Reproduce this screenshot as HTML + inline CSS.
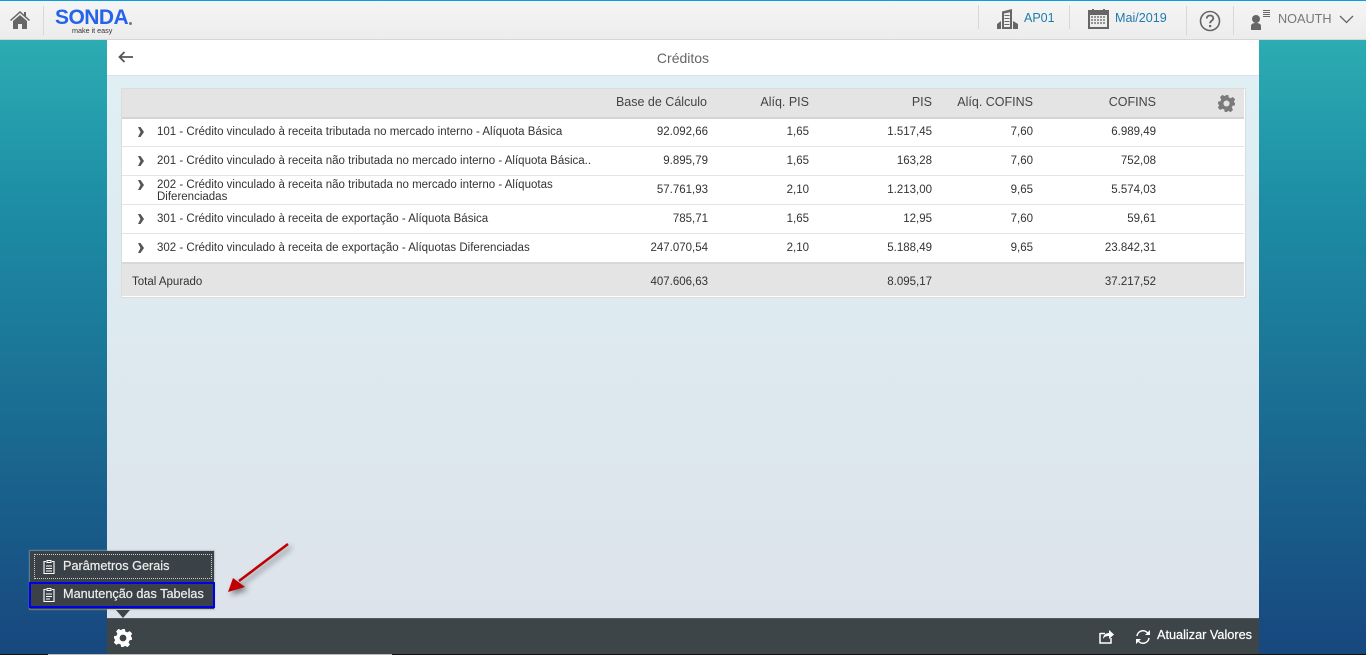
<!DOCTYPE html>
<html lang="pt"><head><meta charset="utf-8"><title>Créditos</title>
<style>
html,body{margin:0;padding:0;width:1366px;height:655px;overflow:hidden;font-family:"Liberation Sans",sans-serif;color:#333}
body{position:relative;background:linear-gradient(180deg,#2cacb3 40px,#1d8ea5 200px,#17477e 655px)}
div,span,svg{position:absolute;white-space:nowrap}
.t{font-size:11.5px;line-height:12px;color:#333}
.r{text-align:right;width:120px}
.h{font-size:12.5px;line-height:14px;color:#444;text-align:right;width:120px;top:95px}
.line{left:122px;width:1122px;height:1px;background:#e4e4e4}
.sep{width:1px;background:#d8d8d8}
.chev{left:137px;width:8px;height:10px}
</style></head><body>
<div style="left:0;top:0;width:1366px;height:40px;background:linear-gradient(#f5f5f5,#ececec);box-sizing:border-box"></div>
<div style="left:0;top:0;width:1366px;height:1px;background:#0a9fe0"></div>
<div style="left:0;top:39px;width:1366px;height:1px;background:#d6d6d6"></div>

<svg style="left:10px;top:10px" width="20" height="20" viewBox="0 0 20 20"><path d="M0 10L10 1l4 3.600V2h2v4.400L20 10l-1 1-9-8-9 8z" fill="#666"/><path d="M3 11l7-6 7 6v8h-5v-5H8v5H3z" fill="#666"/></svg>
<div class="sep" style="left:43px;top:6px;height:29px"></div>
<div style="left:55px;top:6px;font-size:21px;line-height:23px;font-weight:bold;color:#2563eb;letter-spacing:-.55px">SONDA</div>
<div style="left:129px;top:22px;width:3px;height:3px;border-radius:2px;background:#777"></div>
<div style="left:72px;top:27px;font-size:7.200px;line-height:8px;color:#333">make it easy</div>

<div class="sep" style="left:978px;top:5px;height:24px"></div>
<svg style="left:997px;top:9px" width="21" height="20" viewBox="0 0 21 20"><path d="M5 2.500L15 0v20H5z" fill="#666"/><path d="M7 4.500l6-1.300V18H7z" fill="#eee"/><path d="M7.500 6.500h5M7.500 9.500h5M7.500 12.500h5M7.500 15.500h5" stroke="#666" stroke-width="1"/><path d="M0 20v-5l4-3v8zM16 12l5 3v5h-5z" fill="#666"/><path d="M6 20v-2h8v2z" fill="#666"/></svg>
<div style="left:1024px;top:11px;font-size:12.500px;line-height:14px;color:#1f7bab">AP01</div>
<div class="sep" style="left:1069px;top:5px;height:24px"></div>
<svg style="left:1088px;top:9px" width="21" height="20" viewBox="0 0 21 20"><rect x="0" y="1" width="21" height="19" fill="#666"/><rect x="2" y="6" width="17" height="12" fill="#eee"/><path d="M3 8h15M3 11h15M3 14h15" stroke="#777" stroke-width="1.500" stroke-dasharray="2 1"/><path d="M5 0v3M16 0v3" stroke="#666" stroke-width="2"/></svg>
<div style="left:1115px;top:11px;font-size:12.600px;line-height:14px;color:#1f7bab">Mai/2019</div>
<div class="sep" style="left:1186px;top:6px;height:29px"></div>
<svg style="left:1199px;top:10px" width="22" height="22" viewBox="0 0 22 22"><circle cx="11" cy="11" r="9.500" fill="none" stroke="#666" stroke-width="1.600"/><path d="M7.800 8.500c0-2 1.500-3 3.300-3s3.200 1 3.200 2.800c0 2.500-3.200 2.300-3.200 5" fill="none" stroke="#666" stroke-width="1.800"/><rect x="10" y="15" width="2.200" height="2.200" fill="#666"/></svg>
<div class="sep" style="left:1233px;top:6px;height:29px"></div>
<svg style="left:1250px;top:10px" width="22" height="20" viewBox="0 0 22 20"><circle cx="6" cy="9" r="4" fill="#666"/><path d="M1 20v-4c0-2 2-3 5-3s5 1 5 3v4z" fill="#666"/><path d="M13 .5h7M13 2.500h7M13 4.500h7M13 6.500h7" stroke="#666" stroke-width="1"/></svg>
<div style="left:1278px;top:12px;font-size:12.700px;line-height:14px;color:#777">NOAUTH</div>
<svg style="left:1339px;top:15px" width="15" height="9" viewBox="0 0 15 9"><path d="M1 1l6.500 6.500L14 1" fill="none" stroke="#666" stroke-width="1.300"/></svg>

<div style="left:107px;top:40px;width:1152px;height:578px;background:linear-gradient(#dff0f4,#dde9ef 55%,#dde3eb)"></div>
<div style="left:107px;top:40px;width:1152px;height:35px;background:#fff;border-bottom:1px solid #d5e4e8"></div>
<svg style="left:118px;top:51px" width="15" height="12" viewBox="0 0 15 12"><path d="M6.500 1L1.500 6l5 5M2 6h13" fill="none" stroke="#555" stroke-width="1.800"/></svg>
<div style="left:107px;top:50px;width:1152px;text-align:center;font-size:14px;line-height:16px;color:#666">Créditos</div>

<div style="left:121px;top:88px;width:1123px;height:208px;background:#fff;border:1px solid #dcdcdc"></div>
<div style="left:122px;top:89px;width:1122px;height:30px;background:#e4e4e4;border-bottom:2px solid #d4d4d4;box-sizing:border-box"></div>
<div class="h" style="left:587px">Base de Cálculo</div>
<div class="h" style="left:689px">Alíq. PIS</div>
<div class="h" style="left:812px">PIS</div>
<div class="h" style="left:913px">Alíq. COFINS</div>
<div class="h" style="left:1036px">COFINS</div>
<svg style="left:1218px;top:95px" width="17" height="17" viewBox="-10 -10 20 20"><path d="M-2-10h4l.6 2.800 2.300 1 2.500-1.500 2.800 2.800-1.500 2.500 1 2.300L10-2v4l-2.800.6-1 2.300 1.500 2.500-2.800 2.800-2.500-1.500-2.300 1L2 10h-4l-.6-2.800-2.300-1-2.500 1.500-2.800-2.800 1.500-2.500-1-2.300L-10 2v-4l2.800-.6 1-2.300-1.500-2.500 2.800-2.800 2.500 1.500 2.300-1z" fill="#7b7b7b"/><circle r="3.600" fill="#e4e4e4"/></svg>

<div class="line" style="top:146px"></div><div class="line" style="top:175px"></div><div class="line" style="top:204px"></div><div class="line" style="top:233px"></div>
<div style="left:122px;top:262px;width:1122px;height:34px;background:#e4e4e4;border-top:2px solid #d8d8d8;box-sizing:border-box"></div>

<svg class="chev" style="top:127px" viewBox="0 0 8 10"><path d="M1 0h2.500L7 5 3.500 10H1l2.500-5z" fill="#555"/></svg>
<svg class="chev" style="top:156px" viewBox="0 0 8 10"><path d="M1 0h2.500L7 5 3.500 10H1l2.500-5z" fill="#555"/></svg>
<svg class="chev" style="top:180px" viewBox="0 0 8 10"><path d="M1 0h2.500L7 5 3.500 10H1l2.500-5z" fill="#555"/></svg>
<svg class="chev" style="top:214px" viewBox="0 0 8 10"><path d="M1 0h2.500L7 5 3.500 10H1l2.500-5z" fill="#555"/></svg>
<svg class="chev" style="top:243px" viewBox="0 0 8 10"><path d="M1 0h2.500L7 5 3.500 10H1l2.500-5z" fill="#555"/></svg>

<div class="t" style="left:157px;top:126px">101 - Crédito vinculado à receita tributada no mercado interno - Alíquota Básica</div>
<div class="t" style="left:157px;top:155px">201 - Crédito vinculado à receita não tributada no mercado interno - Alíquota Básica..</div>
<div class="t" style="left:157px;top:179px">202 - Crédito vinculado à receita não tributada no mercado interno - Alíquotas</div>
<div class="t" style="left:157px;top:191px">Diferenciadas</div>
<div class="t" style="left:157px;top:213px">301 - Crédito vinculado à receita de exportação - Alíquota Básica</div>
<div class="t" style="left:157px;top:242px">302 - Crédito vinculado à receita de exportação - Alíquotas Diferenciadas</div>

<div class="t r" style="left:588px;top:126px">92.092,66</div><div class="t r" style="left:689px;top:126px">1,65</div><div class="t r" style="left:812px;top:126px">1.517,45</div><div class="t r" style="left:913px;top:126px">7,60</div><div class="t r" style="left:1036px;top:126px">6.989,49</div>
<div class="t r" style="left:588px;top:155px">9.895,79</div><div class="t r" style="left:689px;top:155px">1,65</div><div class="t r" style="left:812px;top:155px">163,28</div><div class="t r" style="left:913px;top:155px">7,60</div><div class="t r" style="left:1036px;top:155px">752,08</div>
<div class="t r" style="left:588px;top:184px">57.761,93</div><div class="t r" style="left:689px;top:184px">2,10</div><div class="t r" style="left:812px;top:184px">1.213,00</div><div class="t r" style="left:913px;top:184px">9,65</div><div class="t r" style="left:1036px;top:184px">5.574,03</div>
<div class="t r" style="left:588px;top:213px">785,71</div><div class="t r" style="left:689px;top:213px">1,65</div><div class="t r" style="left:812px;top:213px">12,95</div><div class="t r" style="left:913px;top:213px">7,60</div><div class="t r" style="left:1036px;top:213px">59,61</div>
<div class="t r" style="left:588px;top:242px">247.070,54</div><div class="t r" style="left:689px;top:242px">2,10</div><div class="t r" style="left:812px;top:242px">5.188,49</div><div class="t r" style="left:913px;top:242px">9,65</div><div class="t r" style="left:1036px;top:242px">23.842,31</div>

<div class="t" style="left:132px;top:276px">Total Apurado</div>
<div class="t r" style="left:588px;top:276px">407.606,63</div><div class="t r" style="left:812px;top:276px">8.095,17</div><div class="t r" style="left:1036px;top:276px">37.217,52</div>

<div style="left:107px;top:618px;width:1152px;height:36px;background:#3d4548;border-top:1px solid #555c5f;box-sizing:border-box"></div>
<div style="left:0;top:654px;width:1366px;height:1px;background:#111"></div>
<div style="left:48px;top:654px;width:344px;height:1px;background:#bbb"></div>

<svg style="left:114px;top:629px" width="18" height="18" viewBox="-10 -10 20 20"><path d="M-2-10h4l.6 2.800 2.300 1 2.500-1.500 2.800 2.800-1.500 2.500 1 2.300L10-2v4l-2.800.6-1 2.300 1.500 2.500-2.800 2.800-2.500-1.500-2.300 1L2 10h-4l-.6-2.800-2.300-1-2.500 1.500-2.800-2.800 1.500-2.500-1-2.300L-10 2v-4l2.800-.6 1-2.300-1.500-2.500 2.800-2.800 2.500 1.500 2.300-1z" fill="#fff"/><circle r="3.800" fill="#3d4548"/></svg>
<svg style="left:1099px;top:629px" width="16" height="15" viewBox="0 0 16 15"><path d="M1 4.500h5M1 4v10h11V9" fill="none" stroke="#fff" stroke-width="1.500"/><path d="M4 10c0-4 3-6 6-6V1l5 4.500L10 10V7c-3 0-5 1-6 3z" fill="#fff"/></svg>
<svg style="left:1135px;top:629px" width="16" height="16" viewBox="0 0 16 16"><path d="M2 7a6 6 0 0 1 11-2.500M14 9a6 6 0 0 1-11 2.500" fill="none" stroke="#fff" stroke-width="1.500"/><path d="M15 1v5h-5zM1 15v-5h5z" fill="#fff"/></svg>
<div style="left:1157px;top:628px;font-size:12.700px;line-height:15px;color:#fff;-webkit-text-stroke:.2px #fff">Atualizar Valores</div>

<div style="left:30px;top:551px;width:184px;height:58px;background:#3b4247;box-shadow:0 0 1px 1px rgba(160,170,175,.6)"></div>
<div style="left:34px;top:554px;width:176px;height:23px;border:1px dotted #ccc"></div>
<div style="left:29px;top:582px;width:186px;height:26px;border:2px solid #0000e6;box-sizing:border-box"></div>
<svg style="left:43px;top:559px" width="12" height="15" viewBox="0 0 12 15"><path d="M4 1.500h4v2H4zM3 2.500H1v12h10v-12H9" fill="none" stroke="#fff" stroke-width="1.100"/><path d="M3 7h6M3 9.500h6M3 12h6" stroke="#fff" stroke-width="1"/></svg>
<svg style="left:43px;top:587px" width="12" height="15" viewBox="0 0 12 15"><path d="M4 1.500h4v2H4zM3 2.500H1v12h10v-12H9" fill="none" stroke="#fff" stroke-width="1.100"/><path d="M3 7h6M3 9.500h6M3 12h4" stroke="#fff" stroke-width="1"/></svg>
<div style="left:63px;top:559px;font-size:12.700px;line-height:15px;color:#eee;-webkit-text-stroke:.2px #eee">Parâmetros Gerais</div>
<div style="left:63px;top:587px;font-size:12.700px;line-height:15px;color:#eee;-webkit-text-stroke:.2px #eee">Manutenção das Tabelas</div>
<div style="left:116px;top:610px;width:0;height:0;border-left:7px solid transparent;border-right:7px solid transparent;border-top:8px solid #3d4548"></div>

<svg style="left:222px;top:538px;filter:drop-shadow(3px 3px 3px rgba(0,0,0,.45))" width="72" height="62" viewBox="0 0 72 62"><path d="M66 6L17 43" stroke="#c00000" stroke-width="2.500" fill="none"/><path d="M6 54L11 40 23 49z" fill="#c00000"/></svg>
</body></html>
